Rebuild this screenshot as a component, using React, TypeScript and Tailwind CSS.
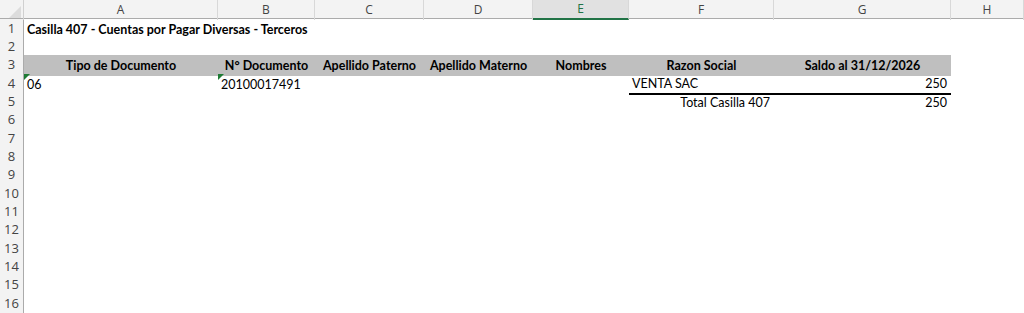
import React from 'react';

const cols = 'grid grid-cols-[24px_194px_97px_109px_109px_96px_145px_177px_1fr]';
const letters = ['A', 'B', 'C', 'D', 'E', 'F', 'G', 'H'];
const heights = ['h-[18px]', 'h-[18px]', 'h-[19px]'];
const cellFont = { fontFamily: 'Lato, "Open Sans", sans-serif' };

type Cell = { text?: string; align?: 'left' | 'center' | 'right'; bold?: boolean; flag?: boolean; under?: boolean; fill?: boolean };

const rows: Record<number, Cell[]> = {
  1: [{ text: 'Casilla 407 - Cuentas por Pagar Diversas - Terceros', bold: true }],
  3: [
    { text: 'Tipo de Documento', align: 'center', bold: true, fill: true },
    { text: 'N° Documento', align: 'center', bold: true, fill: true },
    { text: 'Apellido Paterno', align: 'center', bold: true, fill: true },
    { text: 'Apellido Materno', align: 'center', bold: true, fill: true },
    { text: 'Nombres', align: 'center', bold: true, fill: true },
    { text: 'Razon Social', align: 'center', bold: true, fill: true },
    { text: 'Saldo al 31/12/2026', align: 'center', bold: true, fill: true },
  ],
  4: [
    { text: '06', flag: true },
    { text: '20100017491', flag: true },
    {},
    {},
    {},
    { text: 'VENTA SAC', under: true },
    { text: '250', align: 'right', under: true },
  ],
  5: [{}, {}, {}, {}, {}, { text: 'Total Casilla 407', align: 'right' }, { text: '250', align: 'right' }],
};

const GridCell = ({ cell }: { cell?: Cell }) => {
  const c = cell || {};
  const justify = c.align === 'center' ? 'justify-center' : c.align === 'right' ? 'justify-end' : 'justify-start';
  return (
    <div
      className={`relative flex h-full min-w-0 items-center ${justify} px-[3px] pt-[2px] text-[12.5px] leading-[14px] text-black whitespace-nowrap ${
        c.fill ? 'bg-[#bfbfbf]' : ''
      } ${c.bold ? 'font-bold' : ''} ${c.under ? 'border-b-2 border-black' : ''}`}
      style={cellFont}
    >
      {c.flag && (
        <svg className="absolute left-0 top-0" width="6" height="6" viewBox="0 0 6 6">
          <polygon points="0,0 6,0 0,6" fill="#1e7b34" />
        </svg>
      )}
      {c.text && <span className={c.align === 'right' ? 'pr-[1px]' : ''}>{c.text}</span>}
    </div>
  );
};

export default function App() {
  return (
    <div className="w-[1024px] h-[313px] overflow-hidden bg-white select-none">
      <div className={`${cols} h-[19px] bg-[#f3f3f3] border-b border-[#ababab]`}>
        <div className="relative border-r border-[#d0d0d0]">
          <svg className="absolute right-[2px] bottom-[2px]" width="12" height="12" viewBox="0 0 12 12">
            <polygon points="12,0 12,12 0,12" fill="#dcdcdc" />
          </svg>
        </div>
        {letters.map((l) => (
          <div
            key={l}
            className={`flex items-center justify-center text-[12px] border-r border-[#d8d8d8] ${
              l === 'E' ? 'bg-[#e1e1e1] text-[#217346] border-b-2 border-b-[#217346]' : 'text-[#444]'
            }`}
            style={{ fontFamily: '"Open Sans", "Noto Sans", sans-serif' }}
          >
            {l}
          </div>
        ))}
      </div>
      {Array.from({ length: 16 }, (_, i) => i + 1).map((r) => (
        <div key={r} className={`${cols} ${heights[(r - 1) % 3]}`}>
          <div
            className="flex items-center justify-center bg-[#f3f3f3] border-r border-[#ababab] border-b border-b-[#dadada] text-[13px] text-[#444]"
            style={{ fontFamily: '"Open Sans", "Noto Sans", sans-serif' }}
          >
            {r}
          </div>
          {letters.map((l, ci) => (
            <GridCell key={l} cell={rows[r]?.[ci]} />
          ))}
        </div>
      ))}
    </div>
  );
}
